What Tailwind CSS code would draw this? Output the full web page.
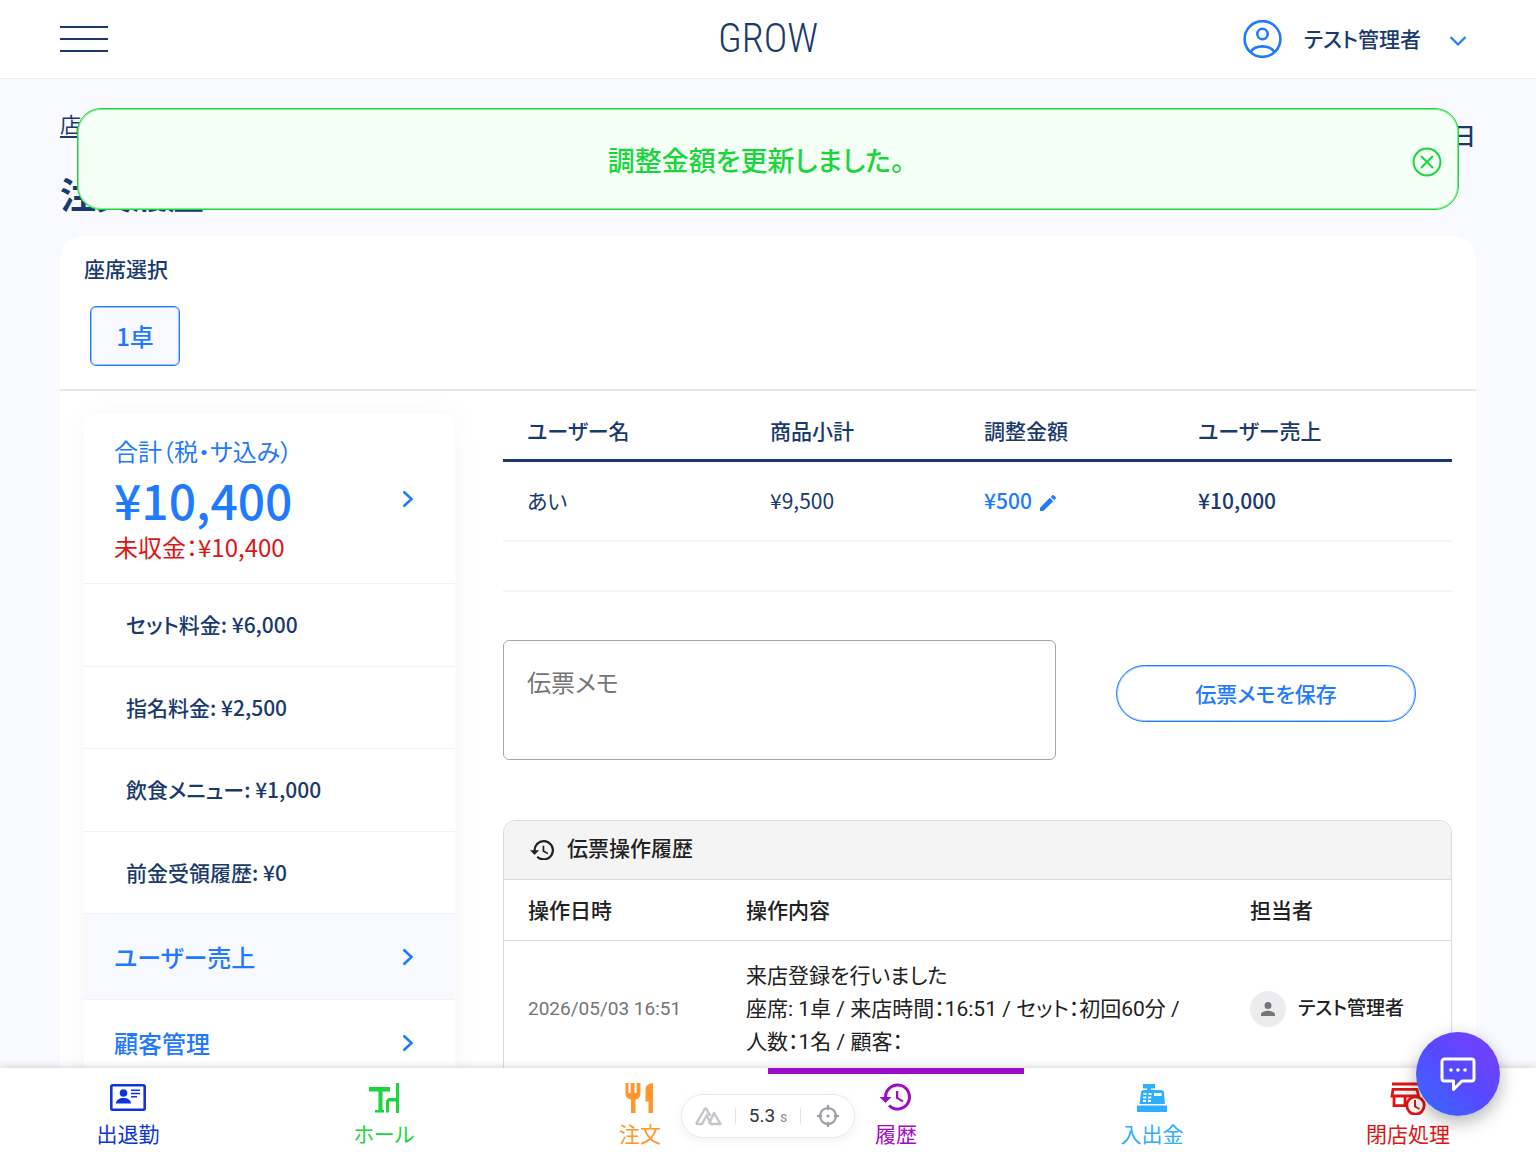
<!DOCTYPE html>
<html lang="ja">
<head>
    <meta charset="UTF-8">
    <meta name="viewport" content="width=device-width, initial-scale=1.0">
    <title>注文履歴 | GROW</title>
    <script src="https://cdn.jsdelivr.net/npm/@tailwindcss/browser@4"></script>
</head>
<body class="flex h-screen flex-col overflow-hidden bg-[#f9faff] font-['Noto_Sans_CJK_JP',sans-serif] text-[21px] text-[#1a3a6e] [font-feature-settings:'palt']">
    <!-- Header -->
    <header class="grid h-[79px] shrink-0 grid-cols-3 items-center border-b border-[#efefef] bg-white px-[60px]">
        <button type="button" aria-label="メニュー" class="flex w-12 flex-col gap-[10px] pb-px">
            <span class="h-[2px] w-full bg-[#1a3a6e]"></span>
            <span class="h-[2px] w-full bg-[#1a3a6e]"></span>
            <span class="h-[2px] w-full bg-[#1a3a6e]"></span>
        </button>
        <a href="#" class="justify-self-center font-['Roboto_Condensed','Liberation_Sans_Narrow',Roboto,sans-serif] text-[40px] leading-[48px] font-light">GROW</a>
        <button type="button" class="flex items-center justify-self-end pr-[9px] font-medium">
            <svg class="mr-[22px] size-[39px] text-[#1f7aff]" viewBox="0 0 39 39" fill="none" stroke="currentColor" stroke-width="2.6">
                <circle cx="19.5" cy="19" r="17.900"/>
                <circle cx="19.5" cy="14" r="5.2"/>
                <path d="M7.500 32c2.5-3.8 7-5.600 12-5.600s9.500 1.800 12 5.600"/>
            </svg>
            テスト管理者
            <svg class="mt-1 ml-7 w-[18px] text-[#1f7aff]" viewBox="0 0 18 12" fill="none" stroke="currentColor" stroke-width="2.2"><path d="M1.500 2 9 9.500 16.500 2"/></svg>
        </button>
    </header>

    <main class="min-h-0 flex-1 overflow-y-auto px-[60px] [scrollbar-width:none]">
        <div class="flex items-start justify-between pt-7">
            <a href="#" class="leading-8 underline underline-offset-4">店舗トップ</a>
            <p class="pt-3 text-2xl font-medium">2026年05月03日</p>
        </div>
        <h1 class="mt-[18px] text-4xl leading-[48px] font-bold">注文履歴</h1>

        <section class="mt-[19px] rounded-t-3xl bg-white">
            <!-- Seat selection -->
            <div class="border-b-2 border-[#e6e6e6] px-6 pt-4 pb-[23px]">
                <h2 class="leading-8 font-medium">座席選択</h2>
                <button type="button" class="mt-[22px] ml-[6px] h-[60px] w-[90px] rounded-md border border-[#1f7aff] bg-[#f8f9ff] text-2xl font-medium text-[#1f7aff] inset-ring inset-ring-[#1f7aff]/40">1卓</button>
            </div>

            <div class="flex items-start gap-12 px-6 pt-3">
                <!-- Bill summary -->
                <aside class="mt-[11px] w-[371px] shrink-0 rounded-xl bg-white shadow-[0_0_30px_rgba(0,0,0,0.04)]">
                    <a href="#" class="flex h-[170px] items-center justify-between border-b border-[#f1f2f4] pr-[41px] pl-[30px] text-2xl text-[#1f7aff]">
                        <span class="flex flex-col">
                            <span class="leading-9">合計（税・サ込み）</span>
                            <span class="text-5xl leading-[60px] font-medium">¥10,400</span>
                            <span class="leading-9 text-[#e01414]">未収金：¥10,400</span>
                        </span>
                        <svg class="w-3" viewBox="0 0 12 18" fill="none" stroke="currentColor" stroke-width="2.600"><path d="M1.500 1.500 9.500 9l-8 7.500"/></svg>
                    </a>
                    <ul class="flex h-[330px] flex-col font-medium">
                        <li class="flex flex-1 items-center border-b border-[#f1f2f4] pl-[42px]">セット料金: ¥6,000</li>
                        <li class="flex flex-1 items-center border-b border-[#f1f2f4] pl-[42px]">指名料金: ¥2,500</li>
                        <li class="flex flex-1 items-center border-b border-[#f1f2f4] pl-[42px]">飲食メニュー: ¥1,000</li>
                        <li class="flex flex-1 items-center border-b border-[#f1f2f4] pl-[42px]">前金受領履歴: ¥0</li>
                    </ul>
                    <a href="#" class="flex h-[86px] items-center justify-between border-b border-[#f1f2f4] bg-[#f8f9ff] pr-[41px] pl-[30px] text-2xl font-medium text-[#1f7aff]">
                        ユーザー売上
                        <svg class="w-3" viewBox="0 0 12 18" fill="none" stroke="currentColor" stroke-width="2.600"><path d="M1.500 1.500 9.500 9l-8 7.500"/></svg>
                    </a>
                    <a href="#" class="flex h-[86px] items-center justify-between pr-[41px] pl-[30px] text-2xl font-medium text-[#1f7aff]">
                        顧客管理
                        <svg class="w-3" viewBox="0 0 12 18" fill="none" stroke="currentColor" stroke-width="2.600"><path d="M1.500 1.500 9.500 9l-8 7.500"/></svg>
                    </a>
                </aside>

                <div class="min-w-0 flex-1">
                    <!-- Sales per user -->
                    <table class="w-full table-fixed text-left">
                        <thead>
                            <tr class="h-[57px] border-b-[3px] border-[#1a3a6e]">
                                <th class="w-[243px] px-6 font-medium">ユーザー名</th>
                                <th class="w-[214px] px-6 font-medium">商品小計</th>
                                <th class="w-[214px] px-6 font-medium">調整金額</th>
                                <th class="px-6 font-medium">ユーザー売上</th>
                            </tr>
                        </thead>
                        <tbody>
                            <tr class="h-[81px] border-b-2 border-[#f4f4f4]">
                                <td class="px-6">あい</td>
                                <td class="px-6">¥9,500</td>
                                <td class="px-6">
                                    <button type="button" class="flex items-center gap-2 font-medium text-[#1f7aff]">
                                        ¥500
                                        <svg class="mt-1 size-4" viewBox="3 3 18 18" fill="currentColor"><path d="M3 17.250V21h3.750L17.810 9.940l-3.750-3.750L3 17.250zM20.710 7.040a1 1 0 0 0 0-1.410l-2.340-2.340a1 1 0 0 0-1.410 0l-1.830 1.830 3.750 3.750 1.830-1.830z"/></svg>
                                    </button>
                                </td>
                                <td class="px-6 font-medium">¥10,000</td>
                            </tr>
                            <tr class="h-[50px] border-b-2 border-[#f4f4f4]"><td colspan="4"></td></tr>
                        </tbody>
                    </table>

                    <!-- Bill memo -->
                    <form class="mt-12 flex items-start gap-[60px] pr-9">
                        <textarea aria-label="伝票メモ" placeholder="伝票メモ" class="h-[120px] min-w-0 flex-1 resize-none rounded-md border border-[#a6a7ae] px-[23px] py-[23px] text-2xl leading-9 placeholder:text-[#757575]"></textarea>
                        <button type="button" class="mt-[25px] h-[57px] w-[300px] rounded-full border border-[#1f7aff] font-medium text-[#1f7aff] inset-ring inset-ring-[#1f7aff]/40">伝票メモを保存</button>
                    </form>

                    <!-- Operation history -->
                    <section class="mt-[60px] rounded-t-xl border border-[#d9dadd] font-[Roboto,'Noto_Sans_CJK_JP',sans-serif] text-[#212121]">
                        <h2 class="flex h-[59px] items-center gap-[13px] rounded-t-xl border-b border-[#d9dadd] bg-[#f4f4f4] px-[26px] font-medium">
                            <svg class="w-6" viewBox="1 3 21 18" fill="currentColor"><path d="M13 3a9 9 0 0 0-9 9H1l3.890 3.890.07.140L9 12H6a7 7 0 1 1 2.060 4.940l-1.420 1.420A9 9 0 1 0 13 3zm-1 5v5l4.280 2.540.720-1.210-3.500-2.080V8H12z"/></svg>
                            伝票操作履歴
                        </h2>
                        <table class="w-full table-fixed text-left">
                            <thead>
                                <tr class="h-[60px] border-b border-[#d9dadd]">
                                    <th class="w-[218px] px-6 pt-1 font-medium">操作日時</th>
                                    <th class="w-[504px] px-6 pt-1 font-medium">操作内容</th>
                                    <th class="px-6 pt-1 font-medium">担当者</th>
                                </tr>
                            </thead>
                            <tbody>
                                <tr>
                                    <td class="px-6 text-[19px] text-[#757575]">2026/05/03 16:51</td>
                                    <td class="px-6 py-[19px] leading-[33px]">来店登録を行いました<br>座席: 1卓 / 来店時間：16:51 / セット：初回60分 /<br>人数：1名 / 顧客：</td>
                                    <td class="px-6 text-[19px] font-medium">
                                        <span class="flex items-center gap-3">
                                            <span class="flex size-9 items-center justify-center rounded-full bg-[#ececee]">
                                                <svg class="w-[14px] text-[#757575]" viewBox="4 4 16 16" fill="currentColor"><path d="M12 12a4 4 0 1 0 0-8 4 4 0 0 0 0 8zm0 2c-2.670 0-8 1.340-8 4v2h16v-2c0-2.660-5.330-4-8-4z"/></svg>
                                            </span>
                                            テスト管理者
                                        </span>
                                    </td>
                                </tr>
                            </tbody>
                        </table>
                    </section>
                </div>
            </div>
        </section>
    </main>

    <!-- Bottom navigation -->
    <nav class="relative grid h-[84px] shrink-0 grid-cols-6 bg-white shadow-[0_0_9px_rgba(0,0,0,0.2)]">
        <a href="#" class="flex flex-col items-center border-t-[6px] border-transparent pt-[5px] text-[#0f35d8]">
            <svg class="size-9" viewBox="0 0 36 36" fill="currentColor">
                <rect x="1.300" y="6.300" width="33.400" height="24.400" rx="1.500" fill="none" stroke="currentColor" stroke-width="2.600"/>
                <circle cx="13.500" cy="14" r="3.800"/>
                <path d="M6 24.500c0-3.500 3.500-5.400 7.500-5.400s7.500 1.900 7.500 5.400zM21 10.500h9V12h-9zm0 3.300h9v1.500h-9zm0 3.300h6v1.500h-6z"/>
            </svg>
            <span class="leading-9">出退勤</span>
        </a>
        <a href="#" class="flex flex-col items-center border-t-[6px] border-transparent pt-[5px] text-[#1bd53c]">
            <svg class="size-9" viewBox="0 0 36 36" fill="currentColor">
                <path d="M3 8h21v4.500h-7.500V31H18v2.500H9V31h3.500V12.500H3zM30 4h3v30h-3V22.500h-7v11h-3V21.500l2.500-2.500H30z"/>
            </svg>
            <span class="leading-9">ホール</span>
        </a>
        <a href="#" class="flex flex-col items-center border-t-[6px] border-transparent pt-[5px] text-[#ff952b]">
            <svg class="size-9" viewBox="0 0 36 36" fill="currentColor">
                <path d="M3.500 4h3v10h2.200V4h3.800v10h2.200V4h3.800v11c0 3-2.200 4.800-5 5.500V34H9V20.500c-3.300-.7-5.500-2.500-5.500-5.500zM31 4v30h-4.500V22.500H23.500V11c0-4 3-7 7.500-7z"/>
            </svg>
            <span class="leading-9">注文</span>
        </a>
        <a href="#" aria-current="page" class="flex flex-col items-center border-t-[6px] border-[#9f0bca] pt-[5px] text-[#9f0bca]">
            <svg class="size-9" viewBox="0 0 24 24" fill="currentColor"><path d="M13 3a9 9 0 0 0-9 9H1l3.890 3.890.07.140L9 12H6a7 7 0 1 1 2.060 4.940l-1.420 1.420A9 9 0 1 0 13 3zm-1 5v5l4.280 2.540.720-1.210-3.500-2.080V8H12z"/></svg>
            <span class="leading-9">履歴</span>
        </a>
        <a href="#" class="flex flex-col items-center border-t-[6px] border-transparent pt-[5px] text-[#2eaeff]">
            <svg class="size-9" viewBox="0 0 36 36" fill="currentColor" fill-rule="evenodd">
                <path d="M9 5h12v4.500h-4V11h10c1.800 0 2.600 1 3 2.500L31 25H5.500L7 13.500C7.300 12 8 11 9.500 11H13V9.500H9zM9.500 14v2h3v-2zm5 0v2h3v-2zm5.500 0v3h7.500v-3zM9.200 17.500v2h3v-2zm5 0v2h3v-2zM9 21v2h3v-2zm5 0v2h3v-2zM3 26.500h30V33H3z"/>
            </svg>
            <span class="leading-9">入出金</span>
        </a>
        <a href="#" class="flex flex-col items-center border-t-[6px] border-transparent pt-[5px] text-[#e01414]">
            <svg class="size-9" viewBox="0 0 36 36" fill="none" stroke="currentColor" stroke-width="2.800">
                <path d="M2 5h26M3 10.400h24l1.600 6.600H2zM4 17v9.600h13M15 17v9"/>
                <circle cx="25.500" cy="26.500" r="8.700" fill="white"/>
                <path d="M25 21v6.500l4.500 2.500" stroke-width="2"/>
            </svg>
            <span class="leading-9">閉店処理</span>
        </a>

        <!-- Timer pill -->
        <div class="absolute top-[26px] left-1/2 flex h-11 w-[174px] -translate-x-1/2 items-center justify-between rounded-full border border-[#e9eaec] bg-white px-3 font-[Roboto,sans-serif] text-[#9a9ba6] shadow-[0_2px_12px_rgba(0,0,0,0.06)]">
            <svg class="w-7" viewBox="0 0 28 20" fill="none" stroke="#c4c5ca" stroke-width="2.400" stroke-linejoin="round"><path d="M2 18 11 2.500h1l4.500 7.500M2 18h6l5.500-10M15 18l5-11 6.500 11H17l-4-8"/></svg>
            <span class="h-4 w-px bg-[#e1e2e6]"></span>
            <span class="text-[19px] text-[#33343e]">5.3 <small class="text-sm text-[#8b8c94]">s</small></span>
            <span class="h-4 w-px bg-[#e1e2e6]"></span>
            <button type="button" aria-label="計測対象">
                <svg class="size-7" viewBox="0 0 28 28" fill="none" stroke="currentColor" stroke-width="2.200"><circle cx="14" cy="14" r="8"/><path d="M14 3v5M14 20v5M3 14h5M20 14h5"/><circle cx="14" cy="14" r="1.600" fill="currentColor" stroke="none"/></svg>
            </button>
        </div>
    </nav>

    <!-- Success toast -->
    <div role="status" class="absolute inset-x-[77px] top-[108px] flex h-[102px] items-center justify-center rounded-3xl border border-[#1bd53c] bg-[#f4fff5] pt-[3px] pr-6 text-[27px] font-medium text-[#1bd53c] inset-ring inset-ring-[#1bd53c]/50">
        調整金額を更新しました。
        <button type="button" aria-label="閉じる" class="absolute top-[38px] right-4">
            <svg class="size-[30px]" viewBox="0 0 30 30" fill="none" stroke="currentColor" stroke-width="2"><circle cx="15" cy="15" r="13.400"/><path d="m9 9 12 12M21 9 9 21"/></svg>
        </button>
    </div>

    <!-- Chat launcher -->
    <button type="button" aria-label="チャット" class="absolute right-9 bottom-9 flex size-[84px] items-center justify-center rounded-full bg-linear-to-tr from-[#2d6bff] via-[#5648ff] to-[#7a3dff] shadow-[0_6px_18px_rgba(0,0,0,0.3)]">
        <svg class="size-9" viewBox="0 0 36 36" fill="none" stroke="white" stroke-width="3" stroke-linejoin="round">
            <path d="M4.500 3h27A2.500 2.500 0 0 1 34 5.500v17a2.500 2.500 0 0 1-2.500 2.500H22l-8.500 8.500V25h-9A2.500 2.500 0 0 1 2 22.500v-17A2.500 2.500 0 0 1 4.500 3z"/>
            <g fill="white" stroke="none"><circle cx="11" cy="14" r="1.800"/><circle cx="18" cy="14" r="1.800"/><circle cx="25" cy="14" r="1.800"/></g>
        </svg>
    </button>
</body>
</html>
